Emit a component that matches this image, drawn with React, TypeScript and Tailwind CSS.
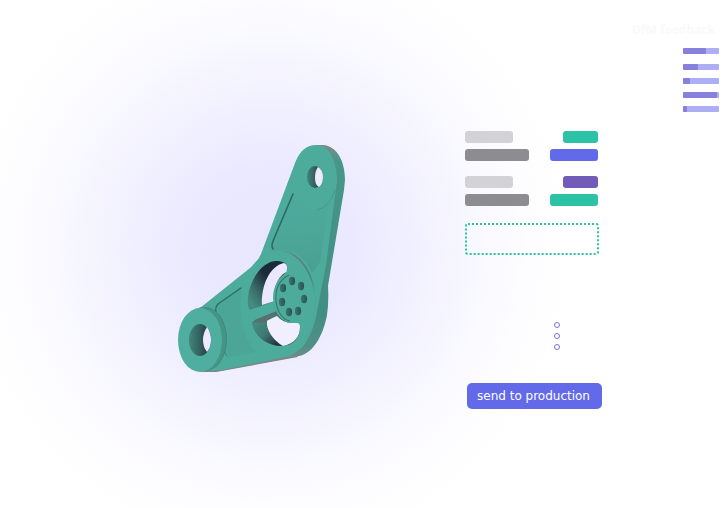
import React from "react";

const properties = [
  { label: "w-12 bg-[#d3d3d7]", value: "w-[35px] bg-[#2bc2a5]" },
  { label: "w-16 bg-[#8d8d91]", value: "w-12 bg-[#626aea]" },
  { label: "w-12 bg-[#d3d3d7]", value: "w-[35px] bg-[#735cb8]" },
  { label: "w-16 bg-[#8d8d91]", value: "w-12 bg-[#2bc2a5]" },
];

const scores = [63, 42, 20, 95, 12];

const holes = [
  [292, 281],
  [301, 286],
  [304, 299],
  [298, 311],
  [289, 312],
  [282, 302],
  [283, 288],
];

function Part() {
  return (
    <svg viewBox="170 140 181 236" className="h-[236px] w-[181px] shrink-0" role="img" aria-label="Bracket part">
      <defs>
        <linearGradient id="wall" x1="0" x2="1" y1="0" y2="0">
          <stop offset="0" stopColor="#408578" />
          <stop offset="0.5" stopColor="#33605f" />
          <stop offset="1" stopColor="#1d2c3c" />
        </linearGradient>
        <linearGradient id="holeWall" x1="0" x2="1" y1="0" y2="0">
          <stop offset="0" stopColor="#3a776f" />
          <stop offset="1" stopColor="#2b4f53" />
        </linearGradient>
        <linearGradient id="upperWall" gradientUnits="userSpaceOnUse" x1="248" y1="298" x2="270" y2="282">
          <stop offset="0" stopColor="#438c7f" />
          <stop offset="0.4" stopColor="#3a6d69" />
          <stop offset="1" stopColor="#1c2b3b" />
        </linearGradient>
        <linearGradient id="lowerWall" gradientUnits="userSpaceOnUse" x1="253" y1="325" x2="276" y2="345">
          <stop offset="0" stopColor="#438c7f" />
          <stop offset="0.5" stopColor="#3f7872" />
          <stop offset="1" stopColor="#26343f" />
        </linearGradient>
        <linearGradient id="side" gradientUnits="userSpaceOnUse" x1="0" y1="145" x2="0" y2="358">
          <stop offset="0" stopColor="#7b8c8a" />
          <stop offset="0.08" stopColor="#46968a" />
          <stop offset="0.8" stopColor="#438e83" />
          <stop offset="0.94" stopColor="#4f8f87" />
          <stop offset="1" stopColor="#6d8c88" />
        </linearGradient>
        <linearGradient id="rim" gradientUnits="userSpaceOnUse" x1="280" y1="250" x2="316" y2="290">
          <stop offset="0" stopColor="#4da699" />
          <stop offset="0.35" stopColor="#647f7c" />
          <stop offset="0.75" stopColor="#3f857b" />
          <stop offset="1" stopColor="#4ba69a" />
        </linearGradient>
        <linearGradient id="pocket" gradientUnits="userSpaceOnUse" x1="295" y1="195" x2="305" y2="270">
          <stop offset="0" stopColor="#4dab9c" />
          <stop offset="0.5" stopColor="#4ca799" />
          <stop offset="1" stopColor="#49a093" />
        </linearGradient>
      </defs>

      {/* slab thickness */}
      <path
        d="M316 145H323C337 146 345 161 345 180L344 190L328 286Q329 302 327 315C323 337 312 354 299 356L220 371L212 372H200L240 300L300 200Z"
        fill="url(#side)"
      />
      <path d="M200 372H216L298 357L294 353L220 366Z" fill="#7b8787" />

      {/* front face */}
      <path
        d="M200 308L250 268Q258 262 261 254L295 163C300 150 307 145 316 145C329 145 337 161 337 181L335 196L326 265L318 306C315 327 308 343 299 350L290 356L222 370L204 371L195 345Z"
        fill="#4dab9c"
      />
      <path d="M294 193L272 243L273 251C292 246 304 256 312 273L320 262L329 203Q324 209 312 210Z" fill="url(#pocket)" />
      <path d="M217 306L242 286C238 310 242 338 256 352L228 357Q219 330 217 306Z" fill="#4ba698" />

      {/* grooves */}
      <g fill="none" strokeLinecap="round" strokeLinejoin="round">
        <path d="M293 194L273 241Q271 246 273 249" stroke="#2d6964" strokeWidth="1.6" />
        <path d="M241 288L218 304Q215 307 216 312" stroke="#2d6964" strokeWidth="1.2" />
        <path d="M335 190Q330 207 317 210" stroke="#438f84" strokeWidth="0.7" />
        <path d="M225 339C224 348 224 354 227 356" stroke="#397d75" strokeWidth="1" />
      </g>

      {/* lower boss */}
      <ellipse cx="205" cy="339" rx="22" ry="32" fill="#3e877d" />
      <ellipse cx="204" cy="339" rx="22" ry="32" fill="#459488" />
      <ellipse cx="200" cy="340" rx="22" ry="32" fill="#4fae9f" />
      <ellipse cx="200" cy="340" rx="11" ry="16" fill="url(#wall)" />
      <path d="M207 327Q203 333 203 340T207 352Q211 347 211 340T207 327Z" fill="#edeafe" />

      {/* centre ring */}
      <ellipse cx="280" cy="303" rx="36" ry="53" fill="url(#rim)" />
      <ellipse cx="278" cy="304" rx="37" ry="53" fill="#4dab9c" />
      <path
        d="M250 310Q247 307 248 297C250 280 262 260 278 261Q287 262 287 267Q287 272 282 276C275 282 273 291 275 301Z"
        fill="url(#upperWall)"
      />
      <path
        d="M262 305C261 285 270 266 284 263Q287 264 287 267Q287 272 286 272C276 278 273 290 275 301Z"
        fill="#ebe8fe"
      />
      <path
        d="M256 320L277 311Q281 320 292 323L299 324C302 334 296 346 281 346C267 346 254 336 252 323Q252 321 256 320Z"
        fill="url(#lowerWall)"
      />
      <path d="M253 322Q254 320 257 319L277 311L279 315L268 321L260 323Z" fill="#56716f" />
      <path
        d="M267 321Q268 320 277 316Q283 323 292 323H297Q300 323 300 327C300 337 294 344 283 346C274 341 268 332 267 325Z"
        fill="#f1effe"
      />
      <path d="M290 272C279 275 273 286 273 298C274 312 281 323 292 323L306 311L305 279Z" fill="#4dab9c" />
      <path d="M289 275C279 280 275 290 276 301C277 312 283 320 290 321" fill="none" stroke="#36766f" strokeWidth="1.1" />
      {holes.map(([x, y]) => (
        <ellipse key={`${x}-${y}`} cx={x} cy={y} rx="3.1" ry="4.2" fill="url(#holeWall)" />
      ))}

      {/* upper eye */}
      <ellipse cx="315" cy="177" rx="8" ry="11" fill="url(#wall)" />
      <path d="M318 167Q315 171 315 178T319 187Q323 184 323 177T318 167Z" fill="#edeafe" />
    </svg>
  );
}

export default function App() {
  return (
    <main className="flex min-h-screen gap-7 bg-white bg-[radial-gradient(circle_farthest-side_at_37%_49%,#e9e7ff_0%,#ebe9ff_18%,#f3f2ff_35%,#f9f9ff_47%,#fdfdff_56%,#ffffff_68%)] pr-2 font-['DejaVu_Sans',sans-serif]">
      <div className="flex min-w-0 flex-1">
        <section className="flex min-w-0 flex-1 justify-center pt-[140px] pl-14">
          <Part />
        </section>

        <section className="w-[137px] shrink-0 pt-[131px]">
          <ul className="grid w-[133px] grid-cols-1">
            {properties.map((row, i) => (
              <li key={i} className="mb-1.5 flex h-3 justify-between even:mb-[15px]">
                <span className={`h-3 rounded-[3px] ${row.label}`} />
                <span className={`h-3 rounded-[3px] ${row.value}`} />
              </li>
            ))}
          </ul>
          <div className="mt-0.5 h-8 w-[134px] rounded-[3px] border-2 border-dotted border-[#2bc2a5]" />
          <div className="flex flex-col items-center gap-[5px] pt-[67px] pl-[47px]">
            <span className="size-1.5 rounded-full border border-[#7d72d2]" />
            <span className="size-1.5 rounded-full border border-[#7d72d2]" />
            <span className="size-1.5 rounded-full border border-[#7d72d2]" />
          </div>
          <button
            type="button"
            className="mt-[33px] ml-0.5 flex h-[26px] w-[135px] items-center rounded-[5px] bg-[#626aea] pl-2.5 text-[12px] leading-4 whitespace-nowrap text-white"
          >
            send to production
          </button>
        </section>
      </div>

      <aside className="flex w-[90px] shrink-0 flex-col pt-[22px] pr-px">
        <h2 className="pr-0.5 text-center font-['Open_Sans',sans-serif] text-[12px] leading-4 font-bold whitespace-nowrap text-[#fafafa]">
          DfM feedback
        </h2>
        <ul className="flex flex-col items-end gap-2 pt-[10px]">
          {scores.map((score, i) => (
            <li key={i} className="h-1.5 w-9 rounded-[1px] bg-[#adaff4] first:mb-0.5">
              <div className="h-1.5 rounded-[1px] bg-[#8781dd]" style={{ width: `${score}%` }} />
            </li>
          ))}
        </ul>
      </aside>
    </main>
  );
}
